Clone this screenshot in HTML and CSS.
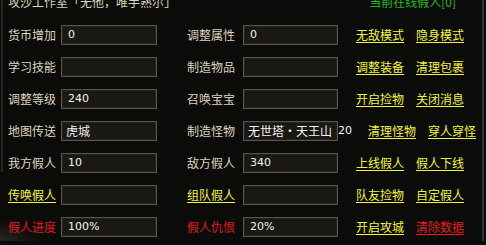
FILE: index.html
```html
<!DOCTYPE html>
<html lang="zh">
<head>
<meta charset="utf-8">
<link rel="stylesheet" href="styles.css">
</head>
<body>
<div class="panel">
  <div class="header">
    <span class="title">攻沙工作室「无他，唯手熟尔」</span>
    <span class="online">当前在线假人[0]</span>
  </div>
  <div class="rows">
    <div class="row">
      <span class="label">货币增加</span>
      <span class="field">0</span>
      <span class="spacer"></span>
      <span class="label">调整属性</span>
      <span class="field">0</span>
      <span class="actions"><a class="link">无敌模式</a><a class="link">隐身模式</a></span>
    </div>
    <div class="row">
      <span class="label">学习技能</span>
      <span class="field"></span>
      <span class="spacer"></span>
      <span class="label">制造物品</span>
      <span class="field"></span>
      <span class="actions"><a class="link">调整装备</a><a class="link">清理包裹</a></span>
    </div>
    <div class="row">
      <span class="label">调整等级</span>
      <span class="field">240</span>
      <span class="spacer"></span>
      <span class="label">召唤宝宝</span>
      <span class="field"></span>
      <span class="actions"><a class="link">开启捡物</a><a class="link">关闭消息</a></span>
    </div>
    <div class="row">
      <span class="label">地图传送</span>
      <span class="field cn">虎城</span>
      <span class="spacer"></span>
      <span class="label">制造怪物</span>
      <span class="field cn">无世塔・天王山</span>
      <span class="actions actions-count"><span class="count">20</span><a class="link">清理怪物</a><a class="link">穿人穿怪</a></span>
    </div>
    <div class="row">
      <span class="label">我方假人</span>
      <span class="field">10</span>
      <span class="spacer"></span>
      <span class="label">敌方假人</span>
      <span class="field">340</span>
      <span class="actions"><a class="link">上线假人</a><a class="link">假人下线</a></span>
    </div>
    <div class="row">
      <a class="label link">传唤假人</a>
      <span class="field"></span>
      <span class="spacer"></span>
      <a class="label link">组队假人</a>
      <span class="field"></span>
      <span class="actions"><a class="link">队友捡物</a><a class="link">自定假人</a></span>
    </div>
    <div class="row">
      <span class="label red">假人进度</span>
      <span class="field">100%</span>
      <span class="spacer"></span>
      <span class="label red">假人仇恨</span>
      <span class="field">20%</span>
      <span class="actions"><a class="link">开启攻城</a><a class="link red">清除数据</a></span>
    </div>
  </div>
</div>
</body>
</html>
```

FILE: styles.css
```css
html, body {
  margin: 0;
  padding: 0;
}
body {
  width: 486px;
  height: 245px;
  overflow: hidden;
  background: #0b0b09;
  font-family: "Noto Sans CJK SC", "DejaVu Sans", sans-serif;
  font-size: 12px;
  color: #ddd4bd;
}
.panel {
  position: relative;
  box-sizing: border-box;
  width: 484px;
  height: 245px;
  border-right: 2px solid #34332f;
  background: radial-gradient(ellipse 40px 20px at 0 245px, #2a2624, transparent);
}
.panel::before {
  content: "";
  position: absolute;
  left: 1px;
  top: 0;
  width: 2px;
  height: 176px;
  background: #262522;
}
.header {
  display: flex;
  height: 12px;
  line-height: 12px;
  margin-top: -4px;
  padding-left: 8px;
}
.title {
  color: #ddd4bd;
}
.online {
  margin-left: auto;
  margin-right: 26px;
  color: #1fbf1f;
}
.rows {
  display: flex;
  flex-direction: column;
  gap: 12px;
  margin-top: 17px;
  padding-left: 8px;
}
.row {
  display: grid;
  grid-template-columns: 53px 96px 30px 56px 95px 1fr;
  height: 20px;
  align-items: center;
}
.label {
  line-height: 20px;
  white-space: nowrap;
}
.field {
  box-sizing: border-box;
  height: 20px;
  border: 1px solid #57544c;
  box-shadow: inset 0 0 0 1px #24221d;
  background: #1a1813;
  color: #f2f2f2;
  font-family: "DejaVu Sans", "Noto Sans CJK SC", sans-serif;
  font-size: 11px;
  line-height: 18px;
  padding-left: 6px;
  white-space: nowrap;
  overflow: hidden;
}
.field.cn {
  font-family: "Noto Sans CJK SC", sans-serif;
  font-size: 12px;
  padding-left: 4px;
}
.actions {
  display: flex;
  gap: 12px;
  padding-left: 18px;
  line-height: 20px;
  white-space: nowrap;
}
.actions-count {
  padding-left: 0;
}
.count {
  font-family: "DejaVu Sans", sans-serif;
  font-size: 11px;
  color: #f2f2f2;
  width: 12px;
  margin-right: 6px;
}
.link {
  color: #f5f53a;
  text-decoration: underline;
  text-underline-offset: 2px;
  text-decoration-thickness: 1px;
  cursor: pointer;
}
.red {
  color: #e01a1a;
}
.link.red {
  color: #ea1c1c;
}
```
